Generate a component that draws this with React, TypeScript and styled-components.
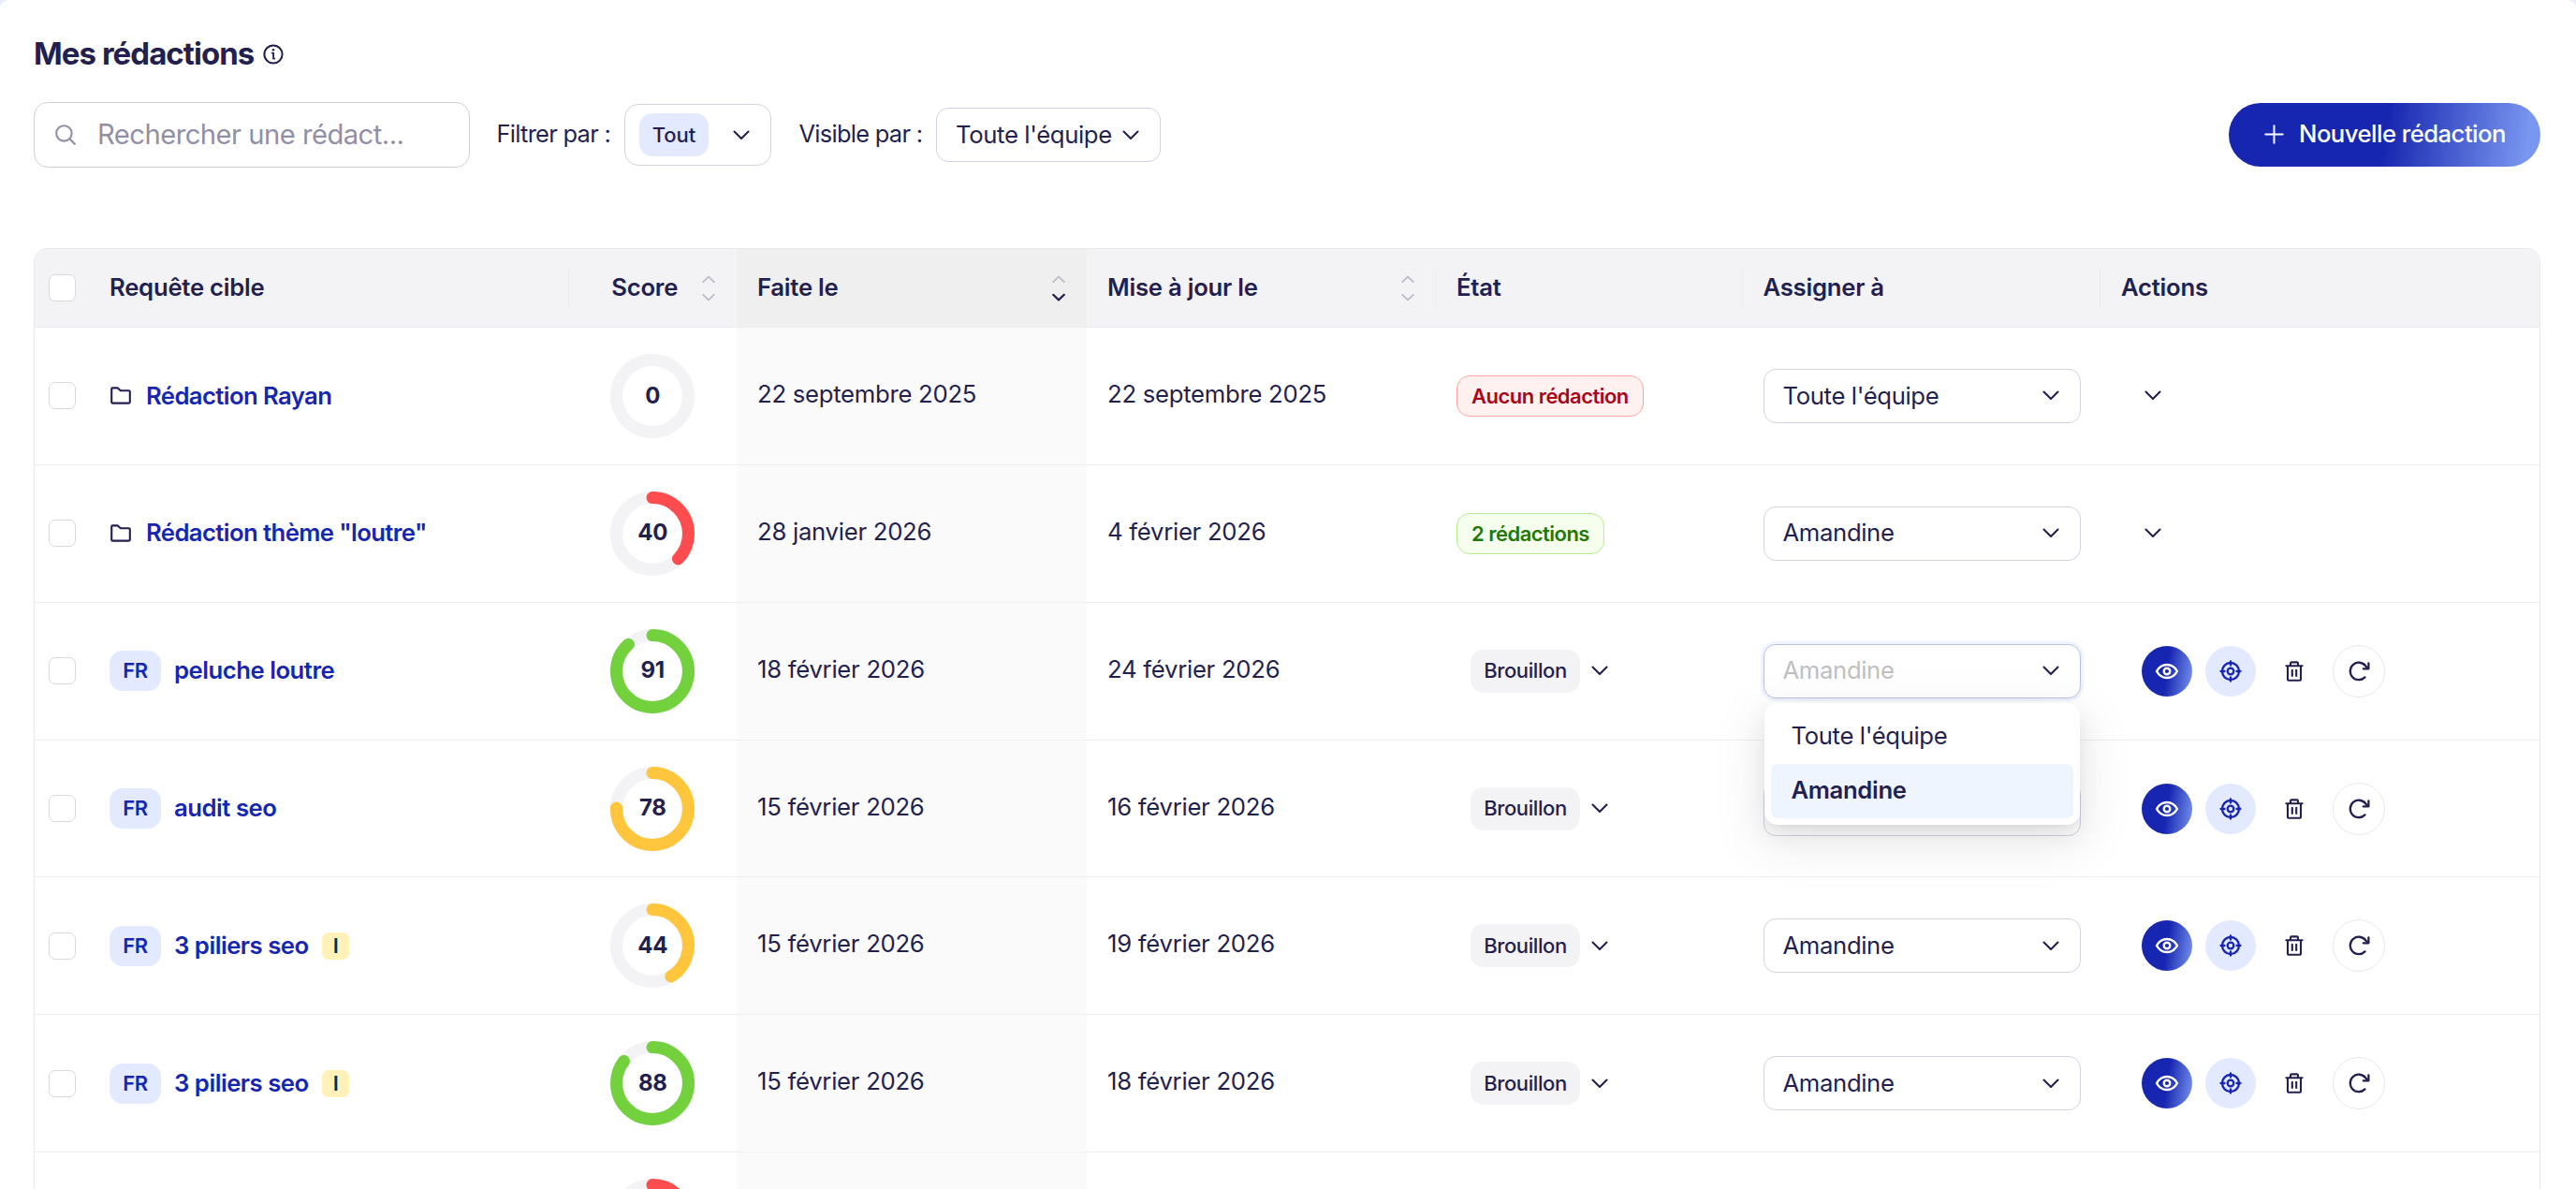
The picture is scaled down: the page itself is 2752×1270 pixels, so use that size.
import React from "react";
import styled, { createGlobalStyle, css } from "styled-components";

const INK = "#231f4e";
const BLUE = "#1726b0";

const GlobalStyle = createGlobalStyle`
  *, *::before, *::after { box-sizing: border-box; }
  html, body { margin: 0; padding: 0; }
  body {
    background: #e8edff;
    color: ${INK};
    font-family: Inter, "Liberation Sans", sans-serif;
    font-size: 25.7px;
    line-height: 1.2;
    overflow: hidden;
  }
`;

const Page = styled.main`
  height: 1270px;
  overflow: hidden;
  padding: 0 38px 0 36px;
  background: #fff;
  border-radius: 9px 9px 0 0;
`;

const TitleBar = styled.header`
  display: flex;
  align-items: center;
  gap: 10px;
  height: 40px;
  margin-top: 38px;
`;

const Title = styled.h1`
  margin: 0;
  font-size: 33px;
  font-weight: 700;
  letter-spacing: -0.95px;
`;

const Toolbar = styled.div`
  display: flex;
  align-items: center;
  height: 70px;
  margin-top: 31px;
`;

const SearchBox = styled.label`
  display: flex;
  align-items: center;
  gap: 23px;
  width: 466px;
  height: 70px;
  padding: 0 22px;
  border: 1px solid #cfcedb;
  border-radius: 15px;
  color: #918fa6;
  font-size: 29.2px;
  letter-spacing: -0.52px;
`;

const FilterLabel = styled.span<{ $left: number; $width: number }>`
  width: ${(p) => p.$width}px;
  margin-left: ${(p) => p.$left}px;
  padding-bottom: 1px;
  font-size: 25.4px;
  letter-spacing: -0.7px;
  white-space: nowrap;
`;

const SelectBox = styled.div<{ $width: number; $height: number; $open?: boolean }>`
  display: flex;
  align-items: center;
  justify-content: space-between;
  width: ${(p) => p.$width}px;
  height: ${(p) => p.$height}px;
  padding: 0 22px 0 20px;
  border: 1px solid #d3d2de;
  border-radius: 13px;
  background: #fff;
  letter-spacing: -0.36px;
  white-space: nowrap;
  ${(p) =>
    p.$open &&
    css`
      border-color: #b9c2dc;
      color: #bfbfbf;
      box-shadow: 0 0 0 3px #edf3ff;
    `}
`;

const TagSelect = styled(SelectBox)`
  padding: 0 22px 0 15px;
  border-radius: 15px;
`;

const FilterTag = styled.span`
  display: grid;
  place-items: center;
  width: 74px;
  height: 46px;
  border-radius: 14px;
  background: #e3e9ff;
  font-size: 22px;
  font-weight: 500;
  letter-spacing: 0;
`;

const PrimaryButton = styled.button`
  display: flex;
  align-items: center;
  gap: 16px;
  width: 333px;
  height: 68px;
  margin-left: auto;
  padding: 0 0 2px 38px;
  border: 0;
  border-radius: 34px;
  background: linear-gradient(98deg, ${BLUE} 50%, #7996f0 95%);
  color: #fff;
  font: inherit;
  font-weight: 500;
  letter-spacing: -0.54px;
  white-space: nowrap;
`;

const Table = styled.div`
  margin-top: 86px;
  border: 1px solid #e8e8ea;
  border-bottom: 0;
  border-radius: 15px 15px 0 0;
  overflow: hidden;
`;

const gridColumns = css`
  display: grid;
  grid-template-columns: 58px 512.5px 179.5px 374px 373px 327.5px 382.5px 1fr;
`;

const HeadRow = styled.div`
  ${gridColumns}
  height: 84px;
  border-bottom: 1px solid #ededf0;
  background: #f3f3f6;
  font-weight: 600;
  letter-spacing: -0.25px;
`;

const Row = styled.div`
  ${gridColumns}
  height: 146.87px;
  border-bottom: 1px solid #eeeeef;
`;

const HeadCell = styled.div<{ $sorted?: boolean; $divider?: boolean; $center?: boolean }>`
  display: flex;
  align-items: center;
  justify-content: space-between;
  padding: 0 23px 0 22px;
  background: ${(p) => (p.$sorted ? "#efefef" : "transparent")};
  background-image: ${(p) => (p.$divider ? "linear-gradient(#ebebee, #ebebee)" : "none")};
  background-size: 1px 40px;
  background-position: right center;
  background-repeat: no-repeat;
  & > span {
    flex: 1;
    padding-bottom: 1px;
    padding-right: ${(p) => (p.$center ? "2px" : 0)};
    text-align: ${(p) => (p.$center ? "center" : "left")};
  }
`;

const Cell = styled.div<{ $sorted?: boolean; $center?: boolean }>`
  display: flex;
  align-items: center;
  justify-content: ${(p) => (p.$center ? "center" : "flex-start")};
  padding: 0 22px;
  background: ${(p) => (p.$sorted ? "#fafafa" : "transparent")};
  white-space: nowrap;
`;

const CheckCell = styled.div`
  display: flex;
  align-items: center;
  padding-left: 15px;
`;

const Checkbox = styled.span`
  width: 29px;
  height: 29px;
  border: 1px solid #d9d9d9;
  border-radius: 7px;
  background: #fff;
`;

const DateText = styled.span`
  padding-bottom: 3px;
  letter-spacing: -0.27px;
`;

const QueryLink = styled.a<{ $gap: number }>`
  margin-left: ${(p) => p.$gap}px;
  color: ${BLUE};
  font-weight: 600;
  letter-spacing: ${(p) => (p.$gap === 14 ? -0.48 : -0.6)}px;
`;

const LangTag = styled.span`
  display: grid;
  place-items: center;
  width: 55px;
  height: 43px;
  border-radius: 14px;
  background: #e3e9ff;
  color: ${BLUE};
  font-size: 22px;
  font-weight: 600;
  letter-spacing: -0.5px;
`;

const IntentTag = styled.span`
  display: grid;
  place-items: center;
  width: 29px;
  height: 29px;
  margin-left: 14.5px;
  border-radius: 7px;
  background: #fff1b8;
  font-size: 22px;
  font-weight: 600;
`;

const StatusTag = styled.span<{ $tone: "red" | "green" }>`
  display: flex;
  align-items: center;
  height: 44px;
  padding: 0 15px;
  border: 1px solid ${(p) => (p.$tone === "red" ? "#ffa39e" : "#b7eb8f")};
  border-radius: 14px;
  background: ${(p) => (p.$tone === "red" ? "#fff1f0" : "#f6ffed")};
  color: ${(p) => (p.$tone === "red" ? "#a8071a" : "#237804")};
  font-size: 22px;
  font-weight: 600;
  letter-spacing: -0.52px;
`;

const DraftTag = styled.span`
  display: grid;
  place-items: center;
  width: 117px;
  height: 46px;
  margin: 0 12px 0 15px;
  border-radius: 14px;
  background: #f3f3f6;
  font-size: 22px;
  font-weight: 500;
  letter-spacing: -0.4px;
`;

const ScoreRing = styled.div`
  display: grid;
  place-items: center;
  width: 90px;
  height: 90px;
  font-size: 24px;
  font-weight: 700;
  letter-spacing: -0.3px;
  & > * {
    grid-area: 1 / 1;
  }
`;

const AssignSlot = styled.div`
  position: relative;
`;

const Menu = styled.ul`
  position: absolute;
  z-index: 2;
  top: 63px;
  left: 1px;
  width: 337px;
  margin: 0;
  padding: 7px;
  border-radius: 14px;
  background: #fff;
  list-style: none;
  letter-spacing: -0.36px;
  box-shadow: 0 11px 29px rgba(0, 0, 0, 0.08), 0 5px 11px -7px rgba(0, 0, 0, 0.12),
    0 17px 51px 15px rgba(0, 0, 0, 0.05);
`;

const MenuItem = styled.li<{ $active?: boolean }>`
  display: flex;
  align-items: center;
  height: 58px;
  padding: 0 22px 1px;
  border-radius: 7px;
  background: ${(p) => (p.$active ? "#eff5ff" : "transparent")};
  font-weight: ${(p) => (p.$active ? 600 : 400)};
`;

const Actions = styled.div<{ $indent: number }>`
  display: flex;
  align-items: center;
  padding-left: ${(p) => p.$indent}px;
`;

const IconButton = styled.button<{ $kind: "view" | "target" | "delete" | "refresh" }>`
  display: grid;
  place-items: center;
  width: ${(p) => (p.$kind === "refresh" ? 56 : 54)}px;
  height: ${(p) => (p.$kind === "refresh" ? 56 : 54)}px;
  margin-right: 14px;
  padding: 0;
  border: ${(p) => (p.$kind === "refresh" ? "1px solid #e8e8ea" : "0")};
  border-radius: 50%;
  color: ${(p) => (p.$kind === "view" ? "#fff" : p.$kind === "target" ? BLUE : INK)};
  background: ${(p) =>
    p.$kind === "view"
      ? `linear-gradient(98deg, ${BLUE} 50%, #7996f0 100%)`
      : p.$kind === "target"
        ? "#e3e9ff"
        : "transparent"};
`;

const Svg = styled.svg`
  display: block;
  flex: none;
  fill: none;
  stroke: currentColor;
  stroke-linecap: round;
  stroke-linejoin: round;
`;

const FolderSvg = styled(Svg)`
  margin-left: 1px;
`;

const Chevron = () => (
  <Svg width="18" height="11" viewBox="0 0 18 11" strokeWidth="2.1" color={INK}>
    <path d="M1.5 1.5 9 9l7.5-7.5" />
  </Svg>
);

const Sorter = ({ active }: { active?: boolean }) => (
  <Svg width="14" height="28" viewBox="0 0 14 28" strokeWidth="1.8" color="#bdbaca">
    <path d="M1.2 7.2 7 1.6l5.8 5.6" />
    <path d="M1.2 20.8 7 26.4l5.8-5.6" stroke={active ? INK : undefined} strokeWidth={active ? 2.2 : 1.8} />
  </Svg>
);

const InfoIcon = () => (
  <Svg width="22" height="22" viewBox="0 0 22 22" strokeWidth="2">
    <circle cx="11" cy="11" r="9.6" />
    <path d="M9.6 9.6h1.5v6M10.9 15.6h1.3" strokeWidth="1.8" />
    <circle cx="11" cy="6.3" r="1.3" fill="currentColor" stroke="none" />
  </Svg>
);

const SearchIcon = () => (
  <Svg width="22" height="22" viewBox="0 0 22 22" strokeWidth="2.1">
    <circle cx="9.4" cy="9.4" r="8.2" />
    <path d="m15.6 15.6 5.2 5.2" />
  </Svg>
);

const PlusIcon = () => (
  <Svg width="21" height="21" viewBox="0 0 21 21" strokeWidth="2">
    <path d="M10.5 1.3v18.4M1.3 10.5h18.4" />
  </Svg>
);

const FolderIcon = () => (
  <FolderSvg width="22" height="19" viewBox="0 0 22 19" strokeWidth="2.1">
    <path d="M1.2 16.6V2.4c0-.6.4-1 1-1h5.6l3 2.9h9c.6 0 1 .4 1 1v11.3c0 .6-.4 1-1 1H2.2c-.6 0-1-.4-1-1Z" />
  </FolderSvg>
);

const EyeIcon = () => (
  <Svg width="26" height="20" viewBox="0 0 26 20" strokeWidth="2.4">
    <path d="M2 10c2.6-4.6 6.5-7 11-7s8.4 2.4 11 7c-2.6 4.6-6.5 7-11 7S4.6 14.6 2 10Z" />
    <circle cx="13" cy="10" r="3.3" />
  </Svg>
);

const TargetIcon = () => (
  <Svg width="24" height="24" viewBox="0 0 24 24" strokeWidth="2.3">
    <circle cx="12" cy="12" r="9" />
    <circle cx="12" cy="12" r="3.3" />
    <path d="M12 1.5v4M12 18.5v4M1.5 12h4M18.5 12h4" />
  </Svg>
);

const TrashIcon = () => (
  <Svg width="20" height="22" viewBox="0 0 20 22" strokeWidth="2.1">
    <path d="M1.4 5.3h17.2M3 5.3v14.5c0 .5.4.9.9.9h12.2c.5 0 .9-.4.9-.9V5.3" />
    <path d="M6 5V2.6c0-.7.5-1.2 1.2-1.2h5.6c.7 0 1.2.5 1.2 1.2V5M7.8 9.8v6.2M12.2 9.8v6.2" />
  </Svg>
);

const RefreshIcon = () => (
  <Svg width="23" height="22" viewBox="0 0 23 22" strokeWidth="2.3">
    <path d="M17.5 17.4A9.2 9.2 0 1 1 18.2 5.2l2.4 2.7" />
    <path d="M21.4 2.4v5.900h-5.600" />
  </Svg>
);

const ringColor = { red: "#ff4d4f", green: "#73d13d", gold: "#ffc53d" };
type RingTone = keyof typeof ringColor;

const RING_STROKE = 14.5;
const RING_RADIUS = 50 - RING_STROKE / 2;
const RING_LENGTH = 2 * Math.PI * RING_RADIUS;

const Score = ({ value, tone, label = true }: { value: number; tone: RingTone; label?: boolean }) => (
  <ScoreRing>
    <Svg width="90" height="90" viewBox="0 0 100 100" strokeWidth={RING_STROKE}>
      <circle cx="50" cy="50" r={RING_RADIUS} stroke="#f3f3f6" />
      {value > 0 && (
        <circle
          cx="50"
          cy="50"
          r={RING_RADIUS}
          stroke={ringColor[tone]}
          strokeDasharray={`${(value / 100) * RING_LENGTH - RING_STROKE / 2} ${RING_LENGTH}`}
          transform="rotate(-90 50 50)"
        />
      )}
    </Svg>
    {label && <span>{value}</span>}
  </ScoreRing>
);

type Entry = {
  name: string;
  folder?: boolean;
  intent?: string;
  score: number;
  tone: RingTone;
  created: string;
  updated: string;
  status?: { label: string; tone: "red" | "green" };
  assignee: string;
  open?: boolean;
};

const entries: Entry[] = [
  { name: "Rédaction Rayan", folder: true, score: 0, tone: "red", created: "22 septembre 2025", updated: "22 septembre 2025", status: { label: "Aucun rédaction", tone: "red" }, assignee: "Toute l'équipe" },
  { name: 'Rédaction thème "loutre"', folder: true, score: 40, tone: "red", created: "28 janvier 2026", updated: "4 février 2026", status: { label: "2 rédactions", tone: "green" }, assignee: "Amandine" },
  { name: "peluche loutre", score: 91, tone: "green", created: "18 février 2026", updated: "24 février 2026", assignee: "Amandine", open: true },
  { name: "audit seo", score: 78, tone: "gold", created: "15 février 2026", updated: "16 février 2026", assignee: "" },
  { name: "3 piliers seo", intent: "I", score: 44, tone: "gold", created: "15 février 2026", updated: "19 février 2026", assignee: "Amandine" },
  { name: "3 piliers seo", intent: "I", score: 88, tone: "green", created: "15 février 2026", updated: "18 février 2026", assignee: "Amandine" },
];

const EntryRow = ({ entry }: { entry: Entry }) => (
  <Row>
    <CheckCell>
      <Checkbox />
    </CheckCell>
    <Cell>
      {entry.folder ? <FolderIcon /> : <LangTag>FR</LangTag>}
      <QueryLink $gap={entry.folder ? 16 : 14}>{entry.name}</QueryLink>
      {entry.intent && <IntentTag>{entry.intent}</IntentTag>}
    </Cell>
    <Cell $center>
      <Score value={entry.score} tone={entry.tone} />
    </Cell>
    <Cell $sorted>
      <DateText>{entry.created}</DateText>
    </Cell>
    <Cell>
      <DateText>{entry.updated}</DateText>
    </Cell>
    <Cell>
      {entry.status ? (
        <StatusTag $tone={entry.status.tone}>{entry.status.label}</StatusTag>
      ) : (
        <>
          <DraftTag>Brouillon</DraftTag>
          <Chevron />
        </>
      )}
    </Cell>
    <Cell>
      <AssignSlot>
        <SelectBox $width={339} $height={58} $open={entry.open}>
          <span>{entry.assignee}</span>
          <Chevron />
        </SelectBox>
        {entry.open && (
          <Menu>
            <MenuItem>Toute l'équipe</MenuItem>
            <MenuItem $active>Amandine</MenuItem>
          </Menu>
        )}
      </AssignSlot>
    </Cell>
    <Cell>
      {entry.folder ? (
        <Actions $indent={25}>
          <Chevron />
        </Actions>
      ) : (
        <Actions $indent={22}>
          <IconButton $kind="view"><EyeIcon /></IconButton>
          <IconButton $kind="target"><TargetIcon /></IconButton>
          <IconButton $kind="delete"><TrashIcon /></IconButton>
          <IconButton $kind="refresh"><RefreshIcon /></IconButton>
        </Actions>
      )}
    </Cell>
  </Row>
);

export default function App() {
  return (
    <>
      <GlobalStyle />
      <Page>
        <TitleBar>
          <Title>Mes rédactions</Title>
          <InfoIcon />
        </TitleBar>
        <Toolbar>
          <SearchBox>
            <SearchIcon />
            <span>Rechercher une rédact...</span>
          </SearchBox>
          <FilterLabel $left={28.5} $width={136.5}>Filtrer par :</FilterLabel>
          <TagSelect $width={157} $height={66}>
            <FilterTag>Tout</FilterTag>
            <Chevron />
          </TagSelect>
          <FilterLabel $left={29.5} $width={146.5}>Visible par :</FilterLabel>
          <SelectBox $width={240} $height={58}>
            Toute l'équipe
            <Chevron />
          </SelectBox>
          <PrimaryButton>
            <PlusIcon />
            Nouvelle rédaction
          </PrimaryButton>
        </Toolbar>
        <Table>
          <HeadRow>
            <CheckCell>
              <Checkbox />
            </CheckCell>
            <HeadCell $divider><span>Requête cible</span></HeadCell>
            <HeadCell $center><span>Score</span><Sorter /></HeadCell>
            <HeadCell $sorted><span>Faite le</span><Sorter active /></HeadCell>
            <HeadCell $divider><span>Mise à jour le</span><Sorter /></HeadCell>
            <HeadCell $divider><span>État</span></HeadCell>
            <HeadCell $divider><span>Assigner à</span></HeadCell>
            <HeadCell><span>Actions</span></HeadCell>
          </HeadRow>
          {entries.map((entry, i) => (
            <EntryRow key={i} entry={entry} />
          ))}
          <Row>
            <CheckCell />
            <Cell />
            <Cell $center>
              <Score value={38} tone="red" label={false} />
            </Cell>
            <Cell $sorted />
          </Row>
        </Table>
      </Page>
    </>
  );
}
